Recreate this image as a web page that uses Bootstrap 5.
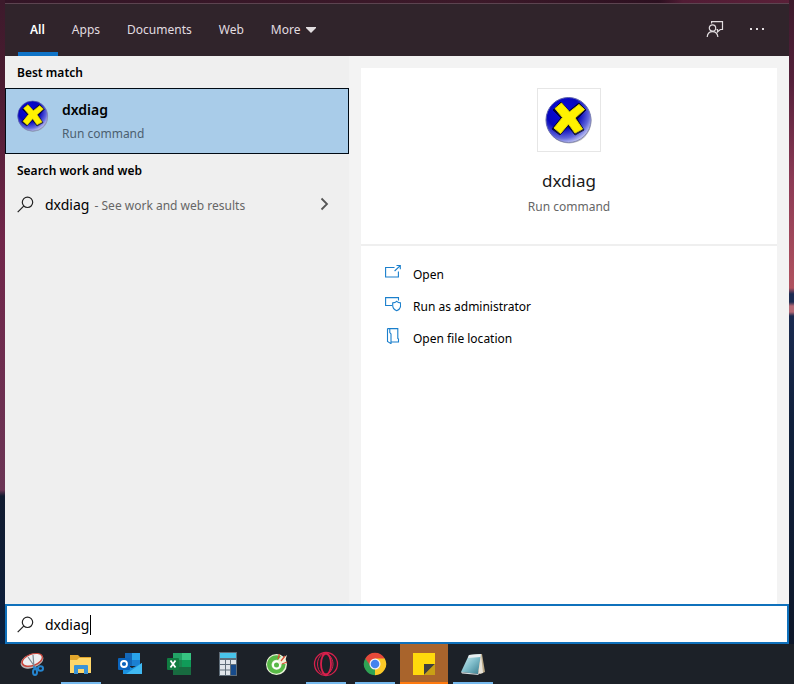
<!DOCTYPE html>
<html lang="en">
<head>
<meta charset="utf-8">
<meta name="viewport" content="width=device-width, initial-scale=1">
<title>Search</title>
<link href="https://cdn.jsdelivr.net/npm/bootstrap@5.3.0/dist/css/bootstrap.min.css" rel="stylesheet">
<style>
  body {
    font-family: "Noto Sans", "Open Sans", sans-serif;
    font-size: 12px;
    line-height: 20px;
    color: #1a1a1a;
    background:
      linear-gradient(#3c1a2b 0, #54203a 80px, #8c3a55 180px, #b0525f 288px, #1c2b52 294px, #1c2b52 302px, #b56a76 306px, #b56a76 312px, #1a2a50 316px, #10203c 420px, #0d1626) right top / 5px 100% no-repeat,
      linear-gradient(#3c1a2b 0, #4a1b30 80px, #71264a 240px, #6b3555 490px, #111b30 496px, #0a2140) left top / 5px 100% no-repeat,
      linear-gradient(90deg, #331526, #3c1929 60%, #2c1020 83%, #521c35 86%, #5a2038);
  }
  .edge { padding: 3px 5px 0; }
  .tabs-bar { background: #30242b; border-top: 1px solid #5c4450; height: 53px; padding: 0 23px 0 13px; }
  .tab {
    background: none; border: 0; color: #e2dde0; display: flex; align-items: center;
    gap: 6px; padding: 4px 13px 0 14px; border-bottom: 4px solid transparent;
  }
  .tab.current { color: #fff; font-weight: 600; border-color: #0f74c8; padding-left: 12px; }
  .tool { background: none; border: 0; padding: 0; display: flex; }
  .results { background: #efefef; flex: 0 0 344px; }
  .group-title { font-size: 12px; font-weight: 600; line-height: 20px; color: #000; margin: 0; padding: 7px 12px 5px; }
  .best { background: #a9cce9; border: 1px solid #000a14; padding: 11px 11px 0; gap: 13px; height: 66px; text-align: left; }
  .best-name { font-size: 14px; line-height: 20px; font-weight: 600; color: #000; }
  .best-kind { line-height: 20px; color: #4c5f70; margin-top: 4px; }
  .web-row { background: none; border: 0; padding: 0 20px 4px 12px; height: 42px; gap: 11px; text-align: left; }
  .web-row svg, .search-box label { margin-bottom: 2px; }
  .web-row .hint { margin-left: 2px; }
  .query { font-size: 14px; color: #000; }
  .hint { color: #666; }
  .detail { background: #f3f3f3; padding: 12px 12px 0; }
  .sheet { background: #fff; }
  .summary { padding: 20px 0 27px; border-bottom: 2px solid #efefef; }
  .tile { width: 64px; height: 64px; border: 1px solid #e6e6e6; }
  .summary h1 { font-size: 17px; font-weight: 400; line-height: 26px; margin: 16px 0 3px; color: #1a1a1a; }
  .actions { padding: 12px 24px; }
  .act { background: none; border: 0; padding: 2px 0 0; height: 32px; gap: 12px; color: #000; }
  .act svg { margin-bottom: 6px; }
  .search-box { background: #fff; border: 2px solid #0f71bc; height: 40px; padding: 2px 10px 0; gap: 11px; }
  .search-box input { border: 0; outline: 0; padding: 0; font-size: 14px; color: #000; background: none; width: 100%; }
  .caret { position: absolute; left: 45px; top: 0; width: 1px; height: 20px; background: #000; }
  .taskbar { background: #1c2128; height: 40px; padding: 0 8px; gap: 1px; }
  .app { background: none; border: 0; padding: 2px 0 0; width: 48px; display: flex; flex-direction: column; align-items: center; }
  .app svg { margin: auto; }
  .app::after { content: ""; height: 2px; width: 40px; }
  .app.running::after { background: #76b9ed; }
  .app.active { background: #a9642c; }
  .app.active::after { background: #ff7a0f; width: 48px; }
</style>
<script src="https://cdn.jsdelivr.net/npm/bootstrap@5.3.0/dist/js/bootstrap.bundle.min.js"></script>
</head>
<body>
<svg class="position-absolute" width="0" height="0" aria-hidden="true">
  <defs>
    <radialGradient id="ball" cx=".38" cy=".32" r=".75">
      <stop offset="0" stop-color="#0a0ae0"/><stop offset=".5" stop-color="#0707bb"/>
      <stop offset=".78" stop-color="#6268dc"/><stop offset="1" stop-color="#e4e6fb"/>
    </radialGradient>
    <linearGradient id="rim" x2="1" y2="1"><stop stop-color="#4a50a8"/><stop offset="1" stop-color="#8e92b8"/></linearGradient>
    <linearGradient id="glass" x2="1" y2="1"><stop stop-color="#e2f6f8"/><stop offset=".5" stop-color="#82bfcc"/><stop offset="1" stop-color="#35798c"/></linearGradient>
  </defs>
  <symbol id="dx" viewBox="0 0 48 48">
    <circle cx="24" cy="25" r="22.500" fill="#777" opacity=".5"/>
    <circle cx="23.500" cy="24" r="22.500" fill="url(#ball)" stroke="url(#rim)"/>
    <path d="M8 14L16 6L24 15L34 7L41 14L32 23L39 34L30 39L23 30L15 39L7 33L16 22Z" fill="#000" opacity=".7" stroke="#000" stroke-linejoin="round"/>
    <path d="M10 12.500L16.500 7L24.500 16L34 8.500L39.500 13.500L30 22L37.500 33L30 37L23.500 28L15.500 37.500L9 32L17.500 21.500Z" fill="#fff200" stroke="#e8dc00" stroke-width="1" stroke-linejoin="round"/>
  </symbol>
  <symbol id="lens" viewBox="0 0 17 17">
    <g fill="none" stroke="#222" stroke-width="1.200"><circle cx="10.500" cy="6.300" r="5.200"/><path d="M6.700 10.200 L.7 16.200"/></g>
  </symbol>
</svg>

<div class="min-vh-100 d-flex flex-column">
  <main class="edge flex-grow-1 d-flex flex-column">
    <nav class="tabs-bar d-flex" aria-label="Search filters">
      <button class="tab current" type="button">All</button>
      <button class="tab" type="button">Apps</button>
      <button class="tab" type="button">Documents</button>
      <button class="tab" type="button">Web</button>
      <button class="tab" type="button">More
        <svg width="10" height="6" viewBox="0 0 10 6" aria-hidden="true"><path d="M0 0H10V1L5 6L0 1Z" fill="#e2dde0"/></svg>
      </button>
      <div class="ms-auto d-flex align-items-center gap-4 pb-1">
        <button class="tool" type="button" aria-label="Feedback">
          <svg width="18" height="18" viewBox="0 0 18 18" fill="none" stroke="#e2dde0" stroke-width="1.200"><path d="M5.600 4.500V2.600H16.500V10.500H14.300L11.500 13V10.500H10.500"/><circle cx="6.500" cy="9" r="3.200"/><path d="M1.200 18C1.500 14.300 3.800 12.600 6.500 12.600S11.500 14.300 11.900 18"/></svg>
        </button>
        <button class="tool" type="button" aria-label="Options">
          <svg width="18" height="18" viewBox="0 0 18 18" fill="#e2dde0"><path d="M2 9h2v2H2zM8 9h2v2H8zM14 9h2v2h-2z"/></svg>
        </button>
      </div>
    </nav>

    <div class="d-flex flex-grow-1">
      <section class="results">
        <h2 class="group-title">Best match</h2>
        <button class="best w-100 d-flex align-items-start" type="button">
          <svg width="32" height="32" viewBox="0 0 48 48" aria-hidden="true"><use href="#dx" width="48" height="48"/></svg>
          <span class="d-flex flex-column"><span class="best-name">dxdiag</span><span class="best-kind">Run command</span></span>
        </button>
        <h2 class="group-title">Search work and web</h2>
        <button class="web-row w-100 d-flex align-items-center" type="button">
          <svg width="17" height="17" aria-hidden="true"><use href="#lens"/></svg>
          <span><span class="query">dxdiag</span> <span class="hint">- See work and web results</span></span>
          <svg class="ms-auto" width="9" height="14" viewBox="0 0 9 14" aria-hidden="true"><path d="M1.500 1.500L7 7L1.500 12.500" fill="none" stroke="#555" stroke-width="1.800"/></svg>
        </button>
      </section>

      <section class="detail flex-grow-1 d-flex">
        <div class="sheet flex-grow-1">
          <div class="summary d-flex flex-column align-items-center">
            <div class="tile d-flex align-items-center justify-content-center"><svg width="48" height="48" aria-hidden="true"><use href="#dx"/></svg></div>
            <h1>dxdiag</h1>
            <div class="hint">Run command</div>
          </div>
          <div class="actions d-flex flex-column align-items-start">
            <button class="act d-flex align-items-center" type="button">
              <svg width="16" height="16" viewBox="0 0 16 16" fill="none" stroke="#1a7fcc" stroke-width="1.100" aria-hidden="true"><path d="M9.500 3.500H.6V13H13.400V7.500M9.600 7L15 1.800M11.500 1.500H15.300V5.200"/></svg>Open
            </button>
            <button class="act d-flex align-items-center" type="button">
              <svg width="16" height="16" viewBox="0 0 16 16" fill="none" stroke="#1a7fcc" stroke-width="1.100" aria-hidden="true"><path d="M13.500 4.500V1.600H.6V9.500H7M11.700 5.300C10.500 6.400 9.200 6.800 7.700 6.900V9.500C7.700 12 9.300 13.700 11.700 14.700C14.200 13.700 15.600 12 15.600 9.500V6.900C14.200 6.800 12.900 6.400 11.700 5.300Z"/></svg>Run as administrator
            </button>
            <button class="act d-flex align-items-center" type="button">
              <svg width="16" height="16" viewBox="0 0 16 16" fill="none" stroke="#1a7fcc" stroke-width="1.100" aria-hidden="true"><path d="M2.500 .6H12.800V10.500L13.500 11V14H6.500M2.500 .6V13.500L6 15.600V6L4.800 4.500V.9"/></svg>Open file location
            </button>
          </div>
        </div>
      </section>
    </div>

    <div class="search-box d-flex align-items-center">
      <label for="q" class="d-flex" aria-label="Search"><svg width="17" height="17" aria-hidden="true"><use href="#lens"/></svg></label>
      <div class="position-relative flex-grow-1 d-flex"><input id="q" type="text" value="dxdiag" autocomplete="off"><span class="caret"></span></div>
    </div>
  </main>

  <nav class="taskbar d-flex" aria-label="Taskbar">
    <button class="app" type="button" aria-label="Snipping Tool">
      <svg width="24" height="24" viewBox="0 0 24 24"><ellipse cx="12" cy="9" rx="11.800" ry="7" transform="rotate(-20 12 9)" fill="#b9b3b4"/><ellipse cx="12.200" cy="8" rx="11.300" ry="6.300" transform="rotate(-20 12.200 8)" fill="#c8453b"/><ellipse cx="12.300" cy="7.800" rx="9.800" ry="5" transform="rotate(-20 12.300 7.800)" fill="#eceff1"/><path d="M8 5L15 15M13 3L14 15" stroke="#7d8a94" stroke-width="1.200"/><g fill="none" stroke="#2585cf" stroke-width="2"><ellipse cx="15" cy="20" rx="2" ry="3"/><ellipse cx="20.500" cy="16.500" rx="2.500" ry="2.200"/><path d="M13 15L18 17"/></g></svg>
    </button>
    <button class="app running" type="button" aria-label="File Explorer">
      <svg width="24" height="24" viewBox="0 0 24 24"><path d="M1 3H9L11 5H22V21H1Z" fill="#e0a52c"/><path d="M1 8H8L10 6H22V21H1Z" fill="#ffd76a"/><path d="M5 14Q5 13 6 13H18Q19 13 19 14V22H15V17H9V22H5Z" fill="#3a93d6"/></svg>
    </button>
    <button class="app" type="button" aria-label="Outlook">
      <svg width="24" height="24" viewBox="0 0 24 24"><path d="M7 1H22V14H7Z" fill="#1468b8"/><path d="M14 1H22V8H14Z" fill="#29a4ea"/><path d="M14 8H22V14H14Z" fill="#1b80d2"/><path d="M5 11L14 16L24 11V22H5Z" fill="#1a91e0"/><path d="M24 11L8 22H24Z" fill="#40b9f2"/><rect y="6" width="12" height="12" rx="1" fill="#0a64bd"/><circle cx="6" cy="12" r="3" fill="none" stroke="#fff" stroke-width="1.800"/></svg>
    </button>
    <button class="app" type="button" aria-label="Excel">
      <svg width="24" height="24" viewBox="0 0 24 24"><path d="M6 1H24V23H6Z" fill="#1c8650"/><path d="M15 1H24V8H15Z" fill="#36c481"/><path d="M6 1H15V8H6Z" fill="#22a366"/><path d="M15 8H24V15H15Z" fill="#109b58"/><path d="M6 15H24V23H6Z" fill="#186b40"/><rect y="6" width="12" height="12" rx="1" fill="#107c41"/><path d="M3.500 8.500L8.500 15.500M8.500 8.500L3.500 15.500" stroke="#fff" stroke-width="1.800"/></svg>
    </button>
    <button class="app" type="button" aria-label="Calculator">
      <svg width="24" height="24" viewBox="0 0 24 24"><path d="M3 0H21V24H3Z" fill="#5f6d79"/><path d="M4 1H20V6H4Z" fill="#49c4ea"/><g fill="#dfe5ea"><path d="M4 8H9V12H4zM10 8H14V12H10zM15 8H20V12H15zM4 13H9V17.500H4zM10 13H14V17.500H10zM4 18.500H9V23H4zM10 18.500H14V23H10z"/></g><path d="M15 13H20V23H15Z" fill="#174b8b"/></svg>
    </button>
    <button class="app" type="button" aria-label="Coc Coc">
      <svg width="24" height="24" viewBox="0 0 24 24"><circle cx="11.500" cy="12.500" r="10.500" fill="#e8f2d8"/><path d="M16 4.500A9.200 9.200 0 1 0 20.500 12H16.500A5 5 0 1 1 13 8Z" fill="#58b947"/><circle cx="11.500" cy="13" r="4.300" fill="#fff"/><circle cx="11.500" cy="13" r="2.500" fill="#58b947"/><path d="M13 10L22 3L20 9L15 13Z" fill="#f5f0d8"/><path d="M13 7L14.500 2M16 9L20 4M17 12L22 10" stroke="#d95036" stroke-width="1.300"/></svg>
    </button>
    <button class="app running" type="button" aria-label="Opera GX">
      <svg width="26" height="26" viewBox="0 0 26 26" fill="none" stroke="#d8204c"><circle cx="13" cy="13" r="11.500" stroke-width="1.300"/><ellipse cx="13" cy="13" rx="5" ry="10.500" stroke-width="1.800"/><path d="M9 3.500C15 0 20 7 20 13S15 26 9 22.500" stroke-width="1"/><path d="M9 3.500C3 7 3 19 9 22.500" stroke-width="1"/></svg>
    </button>
    <button class="app running" type="button" aria-label="Chrome">
      <svg width="24" height="24" viewBox="0 0 24 24"><path d="M12 12L2.300 6.400A11.200 11.200 0 0 1 21.700 6.400Z" fill="#e5493a"/><path d="M12 12L21.700 6.400A11.200 11.200 0 0 1 12 23.200Z" fill="#fbc927"/><path d="M12 12L12 23.200A11.200 11.200 0 0 1 2.300 6.400Z" fill="#2fa254"/><path d="M12 6.400H21.700L17 14.500Z" fill="#fbc927"/><path d="M2.300 6.400L7.200 14.500L12 6.400Z" fill="#e5493a"/><path d="M2.300 6.400L7.200 14.800L10 17Z" fill="#2fa254"/><circle cx="12" cy="12" r="5.500" fill="#f4f4f4"/><circle cx="12" cy="12" r="4.300" fill="#4383ee"/></svg>
    </button>
    <button class="app active" type="button" aria-label="Sticky Notes">
      <svg width="24" height="24" viewBox="0 0 24 24"><path d="M1 1H23V12L12 23H1Z" fill="#ffd90c"/><path d="M12 12H23L12 23Z" fill="#3f3f3f"/><path d="M23 12V23H12Z" fill="#c9a015"/></svg>
    </button>
    <button class="app running" type="button" aria-label="Notepad">
      <svg width="26" height="24" viewBox="0 0 26 24"><path d="M10 3L22 2L25 20L20 22Z" fill="#b9a887"/><path d="M9 3L21 2L18 22L1 20Z" fill="url(#glass)"/><path d="M9 3L21 2L20.500 5L8 6Z" fill="#e8eef0"/><path d="M21 2L23 21L18 22Z" fill="#e5e2d8"/><path d="M1 20L18 22L19 23L2 21.500Z" fill="#d5dde0"/></svg>
    </button>
  </nav>
</div>
</body>
</html>
